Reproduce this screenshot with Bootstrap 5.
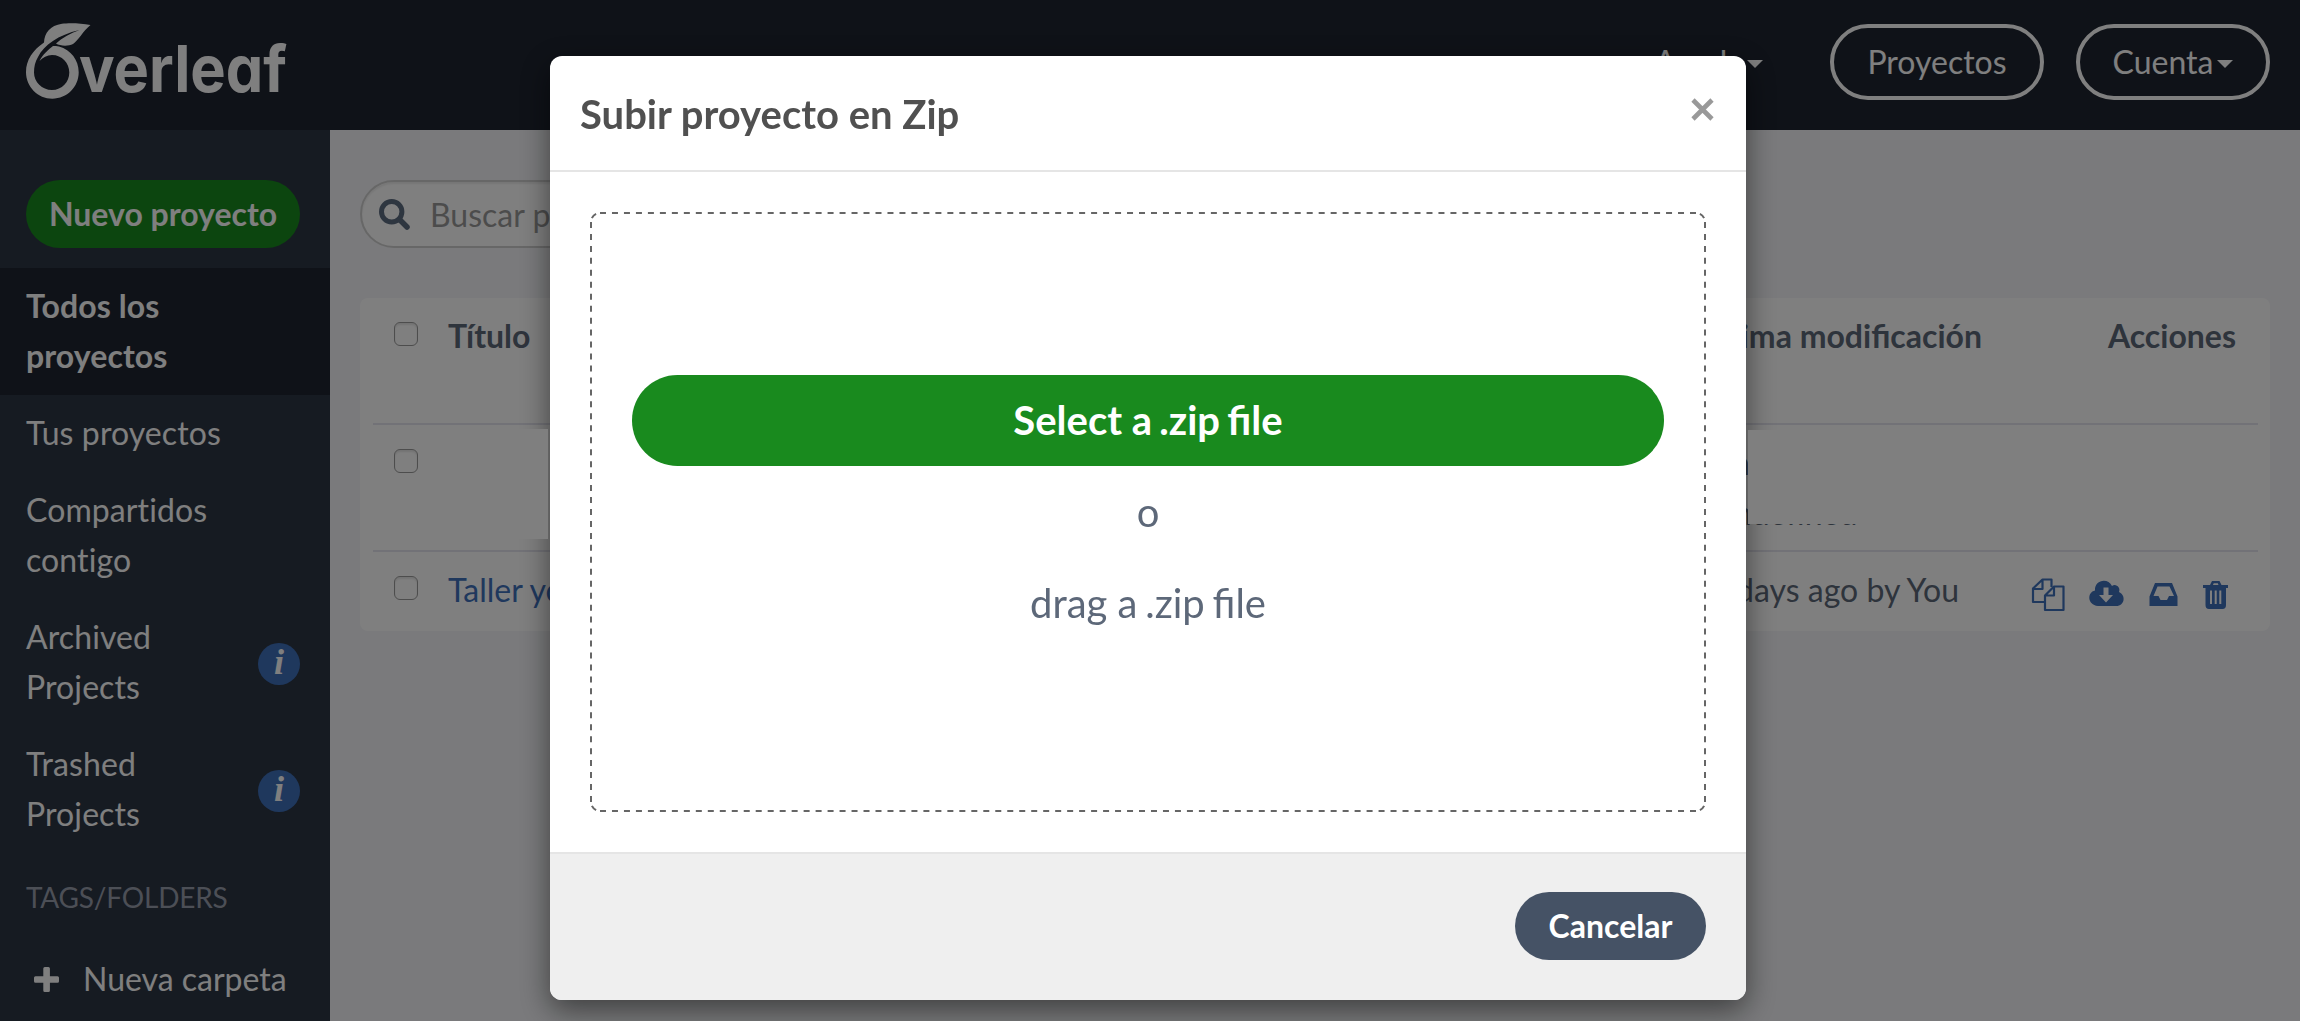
<!DOCTYPE html>
<html lang="es">
<head>
<meta charset="utf-8">
<title>Overleaf - Proyectos</title>
<link href="https://cdn.jsdelivr.net/npm/bootstrap@5.3.0/dist/css/bootstrap.min.css" rel="stylesheet">
<style>
html,body{height:100%;overflow:hidden}
body{font-family:Lato,sans-serif;font-size:32px;line-height:50px;color:#5d6879;background:#f4f5f8}
.topbar{height:130px;background:#1e2430;padding:0 30px 0 26px}
.topbar .nav-pill{border:4px solid #fff;border-radius:38px;height:76px;color:#fff;font-size:32px;line-height:50px;padding:9px 0}
.brand-logo{overflow:visible;flex:none}
.pill-projects{width:214px;margin-right:32px}
.pill-account{width:194px}
.help-link{padding:13px 67px 0 0}
.tri{display:inline-block;border:8px solid transparent;border-top-color:#fff;border-bottom:0;margin-left:4px;vertical-align:6px}
.sidebar{width:330px;background:#2c3645;height:891px;flex:none}
.btn-round{border:0;border-radius:34px;height:68px;font-size:32px;font-weight:700;line-height:50px;padding:9px 0;color:#fff}
.btn-green,.btn-green:hover{background:#198a1e;color:#fff}
.side-new{padding:50px 30px 20px 26px}
.side-item{padding:13px 30px 14px 26px;color:#fff;text-decoration:none;font-variant-ligatures:none;letter-spacing:.1px}
.side-item.current{background:#1e2430;font-weight:700}
.info-dot{width:42px;height:42px;flex:none;margin-top:4px;border-radius:50%;background:#3e70bb;color:#fff;font:italic bold 36px/38px "Liberation Serif",serif;text-align:center}
.side-title{font-size:28px;line-height:44px;letter-spacing:-.2px;color:#999fad;padding:22px 26px 0}
.side-add{padding:35px 0 0 34px}
.search-box{width:1000px;height:68px;border:2px solid #cfcfcf;border-radius:34px;background:#fff;box-shadow:inset 0 2px 2px rgba(0,0,0,.075);padding:0 17px;color:#999}
.list-card{background:#fff;border-radius:8px;height:333px;margin-top:50px;padding:0 12px 0 13px}
.list-line{height:127px;padding:13px 22px 0 21px;border-bottom:2px solid #e4e4ee;color:#5d6879}
.list-line:last-child{border:0}
.list-card .form-check-input{width:24px;height:24px;margin:11px 30px 0 0;border:1.5px solid #9a9a9a;border-radius:6px;box-shadow:inset 0 2px 2px rgba(0,0,0,.1);flex:none}
.c-blue{color:#3e70bb}
.zip-modal .modal-dialog{width:1196px;max-width:none;margin:56px 0 0 550px}
.zip-modal .modal-content{height:944px;border:0;border-radius:12px;box-shadow:0 10px 30px rgba(0,0,0,.5)}
.zip-modal .modal-header{height:116px;border-bottom:2px solid #e5e5e5;padding:0 30px;align-items:flex-start;border-radius:0}
.zip-modal .modal-title{font-size:40px;line-height:54px;font-weight:700;color:#505050;padding-top:31px}
.zip-modal .modal-body{padding:40px;flex:none;height:680px}
.zip-modal .modal-footer{height:148px;border-top:2px solid #e5e5e5;background:#efefef;padding:0 40px 2px;border-radius:0 0 12px 12px}
.zip-modal .modal-footer>*{margin:0}
.x-icon{margin:42px 2px 0 auto}
.drop-zone{position:relative;height:600px;padding:163px 42px 0;font-size:40px;line-height:62px;color:#5d6879;text-align:center}
.drop-edge{position:absolute;inset:0}
.btn-zip{height:91px;border-radius:46px;font-size:40px;line-height:62px;padding:13px 0 15px}
.btn-cancel,.btn-cancel:hover{background:#455265;color:#fff;width:191px}
.tight{margin-left:-2.500px}
.modal-backdrop.half{opacity:.5}
.blank{position:absolute;background:#7f7f7f;z-index:1060}
.blank-title{left:500px;top:429px;width:48px;height:110px}
.blank-date{left:1748px;top:430px;width:180px;height:94px}
</style>
<script src="https://cdn.jsdelivr.net/npm/bootstrap@5.3.0/dist/js/bootstrap.bundle.min.js"></script>
</head>
<body>
<nav class="topbar d-flex">
  <svg class="brand-logo" width="284" height="130" viewBox="26 0 284 130" fill="#fff" role="img" aria-label="Overleaf">
    <path d="M90.5 25C80 23 68 23 62 23.8C50 25.5 44.5 33 44 42.5C33 50 26 60 26 72C26 87 38 98.7 52.3 98.7C67 98.7 78.7 87 78.7 72.3C78.7 60 71 50 59 46.5C57 46 54.5 46 53 46C48 50 43 54 39.5 61C43 57.5 47 55 52 55C62 55 69.3 63 69.3 72.5C69.3 82 62 90 52 90C42 90 34 82 34 72.5C34 67 35 62 38 57C44 45 58 35 79.5 30C70 33.5 62 38 56 43.5C60 46 68 46.5 73 44C78 41 83 31 90.5 25Z"/>
    <text x="79" y="91.5" font-family="Inter,sans-serif" font-weight="700" font-size="65" textLength="208" lengthAdjust="spacingAndGlyphs" style="font-feature-settings:'cv11'">verleaf</text>
  </svg>
  <div class="d-flex ms-auto pt-4 align-items-start">
    <span class="text-white help-link">Ayuda<i class="tri"></i></span>
    <a class="btn nav-pill pill-projects">Proyectos</a>
    <a class="btn nav-pill pill-account">Cuenta<i class="tri"></i></a>
  </div>
</nav>
<div class="d-flex">
  <aside class="sidebar">
    <div class="side-new"><button class="btn btn-round btn-green w-100">Nuevo proyecto</button></div>
    <a class="side-item current d-block">Todos los<br>proyectos</a>
    <a class="side-item d-block">Tus proyectos</a>
    <a class="side-item d-block">Compartidos<br>contigo</a>
    <a class="side-item d-flex align-items-center justify-content-between"><span>Archived<br>Projects</span><span class="info-dot">i</span></a>
    <a class="side-item d-flex align-items-center justify-content-between"><span>Trashed<br>Projects</span><span class="info-dot">i</span></a>
    <div class="side-title">TAGS/FOLDERS</div>
    <a class="side-add d-flex align-items-center text-white text-decoration-none"><svg width="25" height="25" viewBox="0 0 25 25" fill="#fff"><path d="M9.3 1.5Q9.3 0 10.8 0h3.6q1.5 0 1.5 1.5V9.200h7.600q1.500 0 1.500 1.500v3.600q0 1.500-1.500 1.500H15.900v7.600q0 1.500-1.500 1.500h-3.600q-1.500 0-1.500-1.500V15.800H1.500Q0 15.800 0 14.300v-3.600Q0 9.200 1.500 9.200H9.300z"/></svg><span class="ps-4">Nueva carpeta</span></a>
  </aside>
  <main class="flex-grow-1" style="padding:50px 30px 0">
    <div class="search-box d-flex align-items-center">
      <svg width="31" height="31" viewBox="0 0 31 31" fill="none" stroke="#5d6c80" stroke-linecap="round"><circle cx="12.700" cy="12.700" r="10.200" stroke-width="5"/><path d="M20.500 20.500L28 28" stroke-width="5.500"/></svg>
      <span style="padding:2px 0 0 20px">Buscar proyectos…</span>
    </div>
    <div class="list-card">
      <div class="list-line d-flex fw-bold"><input class="form-check-input" type="checkbox"><span class="flex-grow-1">Título</span><span>Última modificación</span><span class="text-end" style="width:254px">Acciones</span></div>
      <div class="list-line d-flex"><input class="form-check-input" type="checkbox"><span class="ms-auto" style="width:520px">an hour ago by<br>undefined</span></div>
      <div class="list-line d-flex"><input class="form-check-input" type="checkbox"><span class="flex-grow-1 c-blue">Taller yo</span><span>18 days ago by You</span>
        <svg width="277" height="50" viewBox="1959 565 277 50" fill="#3e70bb">
          <g fill="none" stroke="#3e70bb" stroke-width="2.200" stroke-linejoin="round"><path d="M2044.500 602H2033V588.500L2042.500 579.500H2051.500V587M2042.500 579.500V589H2033"/><path d="M2045 595.500L2054 586.500H2063.500V610H2045ZM2054 586.500V595.500H2045"/></g>
          <path fill-rule="evenodd" d="M2098 606C2087 605 2087 592 2095 590.500C2094 580 2108 577 2112 586C2116 583 2121 588 2119 592C2126 595 2125 606 2116 606ZM2103.500 587.500V595H2099L2106 602.500L2113 595H2108.500V587.500Z"/>
          <path fill-rule="evenodd" d="M2155 583H2172L2177.500 596.500V606H2149.500V596.500ZM2157.500 586.500L2153.500 596H2158.500L2160.500 600H2167L2169 596H2174L2169.500 586.500Z"/>
          <path fill-rule="evenodd" d="M2203 585H2210L2212 581H2219.500L2221.500 585H2228V588H2226V605Q2226 609 2222.500 609H2209Q2205.500 609 2205.500 605V588H2203ZM2213 585H2218.500L2217.800 583.300H2213.700ZM2210 590.500V604H2212V590.500ZM2214.700 590.500V604H2216.700V590.500ZM2219.300 590.500V604H2221.300V590.500Z"/>
        </svg>
      </div>
    </div>
  </main>
</div>
<div class="modal-backdrop half"></div>
<div class="modal d-block zip-modal" role="dialog">
  <div class="modal-dialog">
    <div class="modal-content">
      <div class="modal-header"><h3 class="modal-title">Subir proyecto en Zip</h3>
        <svg class="x-icon" width="23" height="23" viewBox="0 0 23 23" stroke="#999" stroke-width="4.600"><path d="M2 2L21 21M21 2L2 21"/></svg></div>
      <div class="modal-body"><div class="drop-zone">
        <svg class="drop-edge" width="1116" height="600" fill="none" stroke="#666" stroke-width="2">
          <path stroke-dasharray="6 5.978" d="M10 1H1106M10 599H1106"/>
          <path stroke-dasharray="6 5.958" d="M1 10V590M1115 10V590"/>
          <path stroke-dasharray="0 4 6 10" d="M1 10A9 9 0 0 1 10 1M1106 1A9 9 0 0 1 1115 10M1115 590A9 9 0 0 1 1106 599M10 599A9 9 0 0 1 1 590"/>
        </svg>
        <button class="btn btn-round btn-green btn-zip w-100 d-block position-relative">Select a <span class="tight">.zip</span> <span class="tight">file</span></button>
        <div style="padding-top:15px">o</div>
        <div style="padding-top:29px">drag a <span class="tight">.zip</span> <span class="tight">file</span></div>
      </div></div>
      <div class="modal-footer"><button class="btn btn-round btn-cancel">Cancelar</button></div>
    </div>
  </div>
</div>
<div class="blank blank-title"></div>
<div class="blank blank-date"></div>
</body>
</html>
